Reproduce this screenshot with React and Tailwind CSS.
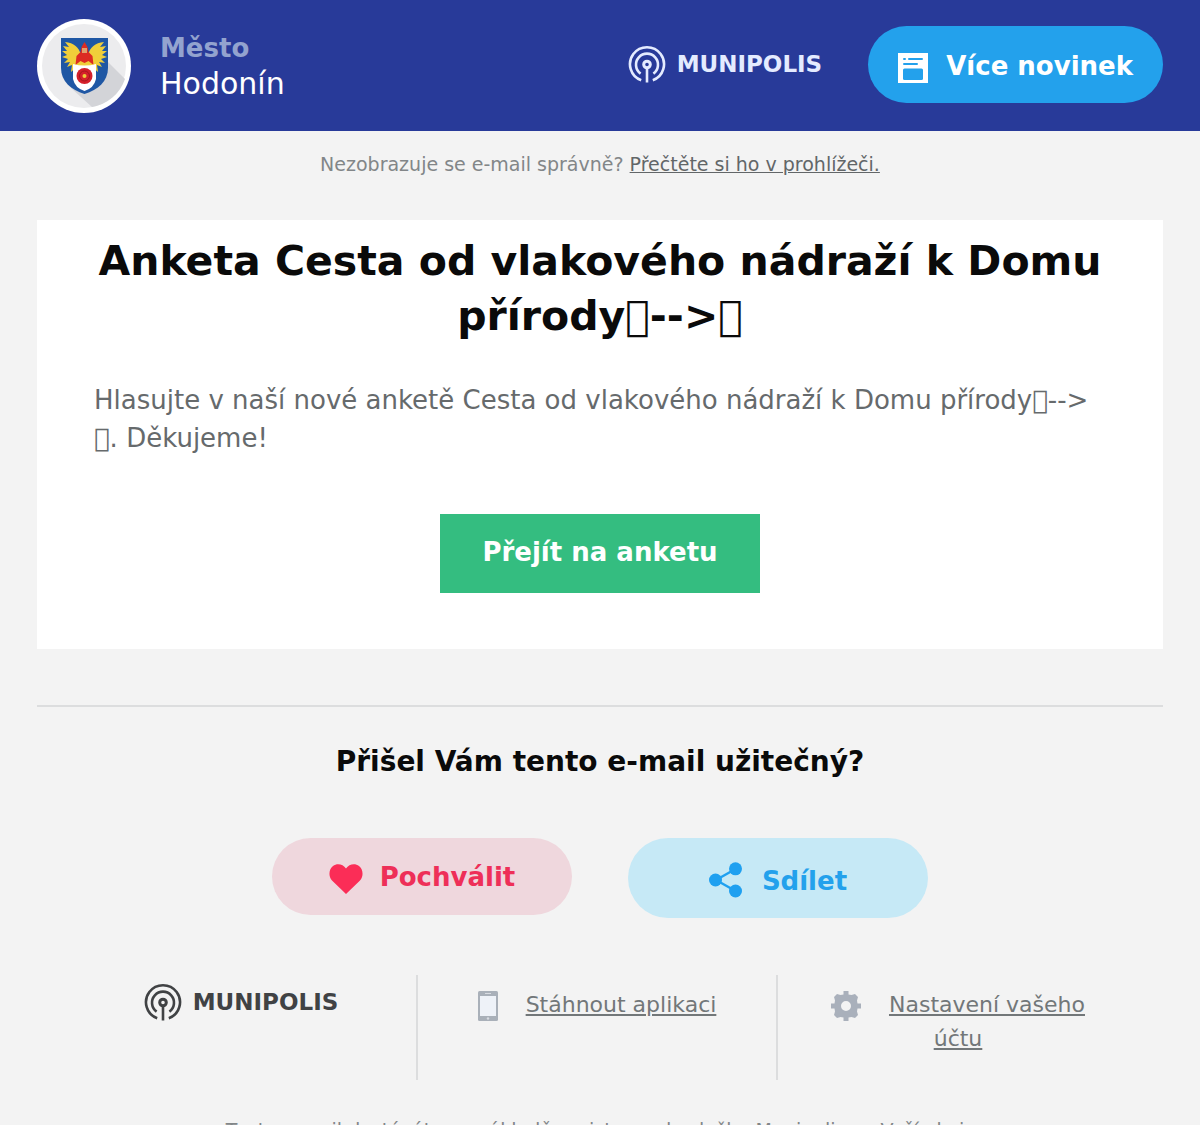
function Radio({ className }) {
  return (
    <svg viewBox="0 0 38 38" className={className} fill="none" stroke="currentColor" strokeWidth="2.6" aria-hidden="true">
      <path d="M13.2 35.2a17 17 0 1 1 11.6 0" />
      <path d="M12.6 28.6a11 11 0 1 1 12.8 0" />
      <circle cx="19" cy="19.5" r="3.3" strokeWidth="3" />
      <path d="M19 23v14.5" />
    </svg>
  );
}

function Brand({ className }) {
  return (
    <a href="#munipolis" className={`flex items-center gap-[11px] ${className}`}>
      <Radio className="size-[38px]" />
      <span className="text-[23px] leading-9 font-bold">MUNIPOLIS</span>
    </a>
  );
}

function Crest() {
  return (
    <svg viewBox="0 0 94 94" className="size-[94px] shrink-0" role="img" aria-label="Hodonín">
      <circle cx="47" cy="47" r="47" fill="#fff" />
      <circle cx="47" cy="47" r="42" fill="#ececee" />
      <path d="M70 42l18 18A42 42 0 0 1 55 88L34 69Z" fill="#d3d4d8" />
      <path d="M24 19h47v30c0 13-10 22-23.500 26C34 71 24 62 24 49Z" fill="#1f57a4" />
      <g fill="#f0cf3a">
        <path d="M44 36c-2-8-7-12-16-13l4 5-6-1 4 5-5 0 5 4-5 2 6 2-4 4 6-1-3 5 5-2-1 7 10-9Z" />
        <path d="M51 36c2-8 7-12 16-13l-4 5 6-1-4 5 5 0-5 4 5 2-6 2 4 4-6-1 3 5-5-2 1 7-10-9Z" />
        <path d="M40 40h15v8H40Z" />
      </g>
      <path d="M47.500 23l3 5 1 5 4 4 1 9-5-4-4 2-4-2-5 4 1-9 4-4 1-5Z" fill="#dc2b22" />
      <path d="M45 29h5v5h-5Z" fill="#e2a06c" />
      <path d="M36 45q11.500 3 23 0v15q-2 9-11.500 12Q38 69 36 60Z" fill="#fff" />
      <circle cx="47.500" cy="57" r="8" fill="#d5202a" />
      <circle cx="47.500" cy="57" r="5" fill="none" stroke="#a5161d" />
      <circle cx="47.500" cy="57" r="2" fill="#f0ca3a" />
    </svg>
  );
}

function NewsIcon() {
  return (
    <svg viewBox="0 0 30 30" className="mt-1 size-[30px]" aria-hidden="true">
      <path d="M0 0h30v30H0Z" fill="#fff" />
      <g fill="none" stroke="#23a1ec" strokeWidth="2" strokeLinecap="round">
        <path d="M6 6h1M11 6h13M6 11h13" />
      </g>
      <rect x="5" y="15.500" width="20" height="11.500" rx="1.500" fill="#23a1ec" />
    </svg>
  );
}

function Heart() {
  return (
    <svg viewBox="0 0 34 30" className="mt-1 h-[30px] w-[34px]" fill="#fb2d57" aria-hidden="true">
      <path d="M17 30 3 16.500C-1 12 0 5 4 2c4-3 10-2 13 2.500C20 0 26-1 30 2c4 3 5 10 1 14.500Z" />
    </svg>
  );
}

function Share() {
  return (
    <svg viewBox="0 0 34 36" className="mt-1 h-9 w-[34px]" fill="#1fa0f0" aria-hidden="true">
      <path d="M7 18 26.500 7M7 18l19.500 11" stroke="#1fa0f0" strokeWidth="2.500" />
      <circle cx="6.500" cy="18" r="6.500" />
      <circle cx="26.500" cy="6.800" r="6.500" />
      <circle cx="26.500" cy="29" r="6.500" />
    </svg>
  );
}

function Phone() {
  return (
    <svg viewBox="0 0 20 30" className="mr-7 inline-block h-[30px] w-5" aria-hidden="true">
      <rect width="20" height="30" rx="1.500" fill="#a9b0b9" />
      <path d="M2 5h16v20H2Z" fill="#eef2f8" />
      <path d="M7 2.500h6" stroke="#d8dce2" />
      <circle cx="10" cy="27.500" r="1.200" fill="#d8dce2" />
    </svg>
  );
}

function Gear() {
  return (
    <svg viewBox="0 0 30 30" className="mr-7 inline-block size-[30px]" fill="#a9b0bb" aria-hidden="true">
      <path
        fillRule="evenodd"
        d="M12.500 0h5v3.500l3 .5L24 3l3 3-1 3.500.5 3H30v5h-3.500l-.5 3L27 24l-3 3-3.500-1-3 .5V30h-5v-3.500l-3-.5L6 27l-3-3 1-3.500-.5-3H0v-5h3.500l.5-3L3 6l3-3 3.500 1 3-.5ZM15 10a5 5 0 1 0 0 10 5 5 0 0 0 0-10Z"
      />
    </svg>
  );
}

export default function App() {
  return (
    <div className="min-h-screen bg-[#f3f3f3] font-['DejaVu_Sans',sans-serif] text-[#727779]">
      <header className="flex items-center justify-between bg-[#283a99] px-[37px] pt-[19px] pb-[18px]">
        <div className="flex items-center gap-[29px]">
          <Crest />
          <div>
            <p className="text-[26px] leading-9 font-bold text-[#93a3cf]">Město</p>
            <p className="text-[30px] leading-9 text-white">Hodonín</p>
          </div>
        </div>
        <div className="flex items-center gap-[46px] pb-1">
          <Brand className="text-[#e4ebff]" />
          <a href="#novinky" className="flex h-[77px] items-center gap-[18px] rounded-full bg-[#23a1ec] px-[30px] pt-1 text-[26px] font-bold text-white">
            <NewsIcon />
            Více novinek
          </a>
        </div>
      </header>

      <main className="px-[37px]">
        <p className="pt-[19px] text-center text-[19px] leading-7 text-[#828688]">
          Nezobrazuje se e-mail správně?{" "}
          <a href="#prohlizec" className="text-[#626668] underline">Přečtěte si ho v prohlížeči.</a>
        </p>

        <section className="mt-[42px] bg-white px-[57px] pt-3.5 pb-14">
          <h1 className="text-center text-[41px] leading-[55px] font-bold text-[#0a0a0a]">
            Anketa Cesta od vlakového nádraží k Domu přírody{"\uE000"}--&gt;{"\uE000"}
          </h1>
          <p className="pt-[37px] text-[26px] leading-[38px] text-[#666a6c]">
            Hlasujte v naší nové anketě Cesta od vlakového nádraží k Domu přírody{"\uE000"}
            <span className="whitespace-nowrap">--&gt;</span>
            <wbr />
            {"\uE000"}. Děkujeme!
          </p>
          <div className="flex justify-center pt-[57px]">
            <a href="#anketa" className="bg-[#34bd80] px-[42px] pt-[19px] pb-[22px] text-[26px] leading-[38px] font-bold text-white">
              Přejít na anketu
            </a>
          </div>
        </section>

        <hr className="mt-14 border-t-2 border-[#dcddde]" />

        <h2 className="pt-9 text-center text-[28px] leading-[38px] font-bold text-[#0a0a0a]">
          Přišel Vám tento e-mail užitečný?
        </h2>

        <div className="flex items-start justify-center gap-14 pt-[57px]">
          <button className="flex h-[77px] w-[300px] items-center justify-center gap-[17px] rounded-full bg-[#efd7dd] text-[26px] font-bold text-[#ee2f58]">
            <Heart />
            <span className="pt-0.5">Pochválit</span>
          </button>
          <button className="flex h-20 w-[300px] items-center justify-center gap-[19px] rounded-full bg-[#c6e9f6] text-[26px] font-bold text-[#23a1ec]">
            <Share />
            <span className="pt-1.5">Sdílet</span>
          </button>
        </div>
      </main>

      <footer className="pt-[57px] pr-[62px] pb-10 pl-[58px]">
        <div className="grid grid-cols-3 divide-x-2 divide-[#dcddde] text-center text-[22px] leading-[34px]">
          <div className="flex h-[105px] items-start justify-center pt-2 pl-2">
            <Brand className="text-[#404244]" />
          </div>
          <div className="px-12 pt-[13px]">
            <Phone />
            <a href="#aplikace" className="underline">Stáhnout aplikaci</a>
          </div>
          <div className="px-12 pt-[13px]">
            <Gear />
            <a href="#nastaveni" className="underline">Nastavení vašeho účtu</a>
          </div>
        </div>
        <p className="pt-9 text-center text-[19px] leading-7 text-[#828688]">
          Tento e-mail dostáváte na základě registrace do služby Munipolis ve Vaší obci.
        </p>
      </footer>
    </div>
  );
}
